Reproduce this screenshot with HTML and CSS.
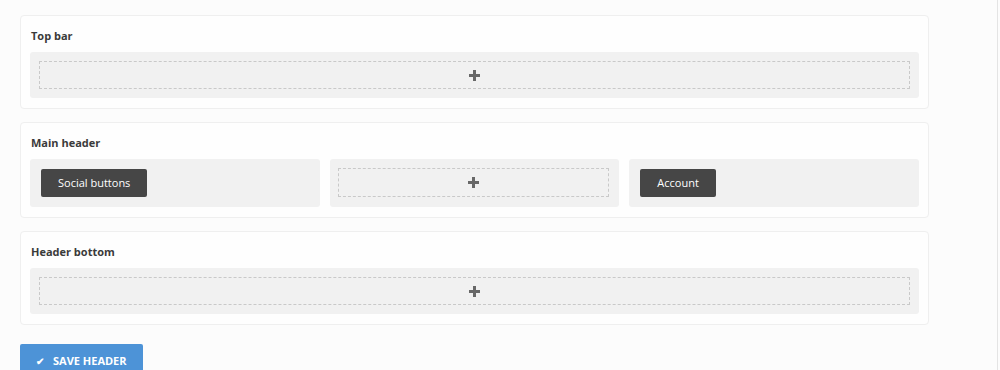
FILE: index.html
```html
<!DOCTYPE html>
<html lang="en">
<head>
  <meta charset="UTF-8">
  <meta name="viewport" content="width=device-width, initial-scale=1.0">
  <title>Header builder</title>
  <link rel="stylesheet" href="styles.css">
</head>
<body>
  <div class="page">
    <div class="section">
      <div class="section-title">Top bar</div>
      <div class="row">
        <div class="zone">
          <div class="drop"><span class="plus"></span></div>
        </div>
      </div>
    </div>

    <div class="section">
      <div class="section-title">Main header</div>
      <div class="row cols">
        <div class="zone">
          <span class="item">Social buttons</span>
        </div>
        <div class="zone">
          <div class="drop"><span class="plus"></span></div>
        </div>
        <div class="zone">
          <span class="item">Account</span>
        </div>
      </div>
    </div>

    <div class="section">
      <div class="section-title">Header bottom</div>
      <div class="row">
        <div class="zone">
          <div class="drop"><span class="plus"></span></div>
        </div>
      </div>
    </div>

    <button class="save-btn"><span class="check">&#10004;</span>SAVE HEADER</button>
  </div>
</body>
</html>
```

FILE: styles.css
```css
html, body {
  margin: 0;
  padding: 0;
}

body {
  font-family: "Open Sans", "Noto Sans", sans-serif;
  background: #fcfcfc;
  color: #333;
  overflow: hidden;
}

.page {
  width: 998px;
  height: 370px;
  padding: 15px 0 0 20px;
  border-right: 1px solid #e4e4e4;
  box-sizing: border-box;
}

.section {
  width: 909px;
  box-sizing: border-box;
  background: #fefefe;
  border: 1px solid #efefef;
  border-radius: 4px;
  padding: 10px 9px;
  margin-bottom: 13px;
}

.section-title {
  font-size: 11px;
  font-weight: 700;
  color: #3a3a3a;
  line-height: 18px;
  padding: 1px 0 0 1px;
  margin-bottom: 7px;
}

.row {
  display: flex;
  gap: 10px;
}

.row .zone {
  flex: 1;
  background: #f1f1f1;
  border-radius: 3px;
  padding: 9px;
  display: flex;
  align-items: center;
  min-height: 28px;
}

.cols .zone {
  padding: 10px;
}

.drop {
  flex: 1;
  height: 26px;
  border: 1px dashed #c9c9c9;
  display: flex;
  align-items: center;
  justify-content: center;
}

.cols .drop {
  margin: -1px 0 0 -2px;
  height: 27px;
}

.plus {
  position: relative;
  width: 11px;
  height: 11px;
}

.plus::before,
.plus::after {
  content: "";
  position: absolute;
  background: #686868;
}

.plus::before {
  left: 0;
  top: 4px;
  width: 11px;
  height: 3px;
}

.plus::after {
  left: 4px;
  top: 0;
  width: 3px;
  height: 11px;
}

.item {
  display: inline-block;
  background: #464646;
  color: #fff;
  font-size: 11px;
  line-height: 28px;
  padding: 0 17px;
  border-radius: 2px;
  margin-left: 1px;
}

.save-btn {
  margin-top: 6px;
  width: 123px;
  height: 32px;
  border: none;
  border-radius: 2px 2px 0 0;
  background: #4d93d7;
  color: #fff;
  font-family: inherit;
  font-size: 11px;
  font-weight: 700;
  text-align: left;
  padding: 0 0 0 16px;
  cursor: pointer;
}

.check {
  font-size: 10px;
  margin-right: 9px;
}
```
